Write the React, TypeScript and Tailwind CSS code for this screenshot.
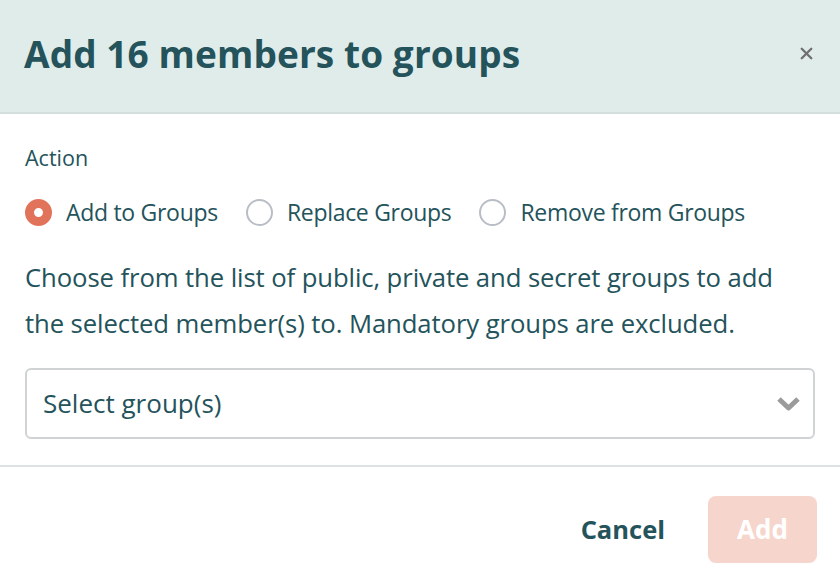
import { X } from "lucide-react";

const options = ["Add to Groups", "Replace Groups", "Remove from Groups"];

export default function App() {
  const selected = 0;
  return (
    <div className="w-[840px] h-[584px] bg-white text-[#24535b] font-['Open_Sans','Noto_Sans',sans-serif] overflow-hidden">
      <header className="h-[114px] bg-[#e0ecea] border-b-2 border-[#d3dedd] flex items-center justify-between pl-[24px] pr-[24px]">
        <h1 className="text-[37px] font-bold tracking-[0.1px] leading-none -mt-[6px]">Add 16 members to groups</h1>
        <X className="w-[19px] h-[19px] text-[#6f6f6f] -mt-[6px]" strokeWidth={3} />
      </header>

      <div className="px-[25px] pt-[29px] pb-[26px] border-b-2 border-[#dde3e3]">
        <div className="text-[21.5px] leading-[30px]">Action</div>
        <div className="mt-[24px] flex items-center gap-[28px]">
          {options.map((o, i) => (
            <label key={o} className="flex items-center gap-[14px] text-[23px] tracking-[-0.3px] leading-[30px]">
              {i === selected ? (
                <span className="w-[27px] h-[27px] rounded-full border-[9px] border-[#e2735b] bg-white" />
              ) : (
                <span className="w-[27px] h-[27px] rounded-full border-2 border-[#b9bdc5] bg-white" />
              )}
              {o}
            </label>
          ))}
        </div>
        <p className="mt-[28px] text-[25.7px] leading-[46px] tracking-[-0.1px]">
          Choose from the list of public, private and secret groups to add the selected member(s) to. Mandatory groups are excluded.
        </p>
        <div className="mt-[21px] h-[71px] rounded-[6px] border-2 border-[#d0d3d4] flex items-center justify-between pl-[16px] pr-[12px]">
          <span className="text-[26px]">Select group(s)</span>
          <svg width="25" height="16" viewBox="0 0 25 16" fill="none">
            <polyline points="3,3 12.5,12 22,3" stroke="#9b9b9b" strokeWidth="5" strokeLinejoin="round" />
          </svg>
        </div>
      </div>

      <footer className="flex items-center justify-end gap-[43px] px-[23px] pt-[29px]">
        <button className="text-[25.5px] font-bold">Cancel</button>
        <button className="w-[109px] h-[67px] rounded-[8px] bg-[#f6d5cc] text-white text-[26px] font-bold">Add</button>
      </footer>
    </div>
  );
}
